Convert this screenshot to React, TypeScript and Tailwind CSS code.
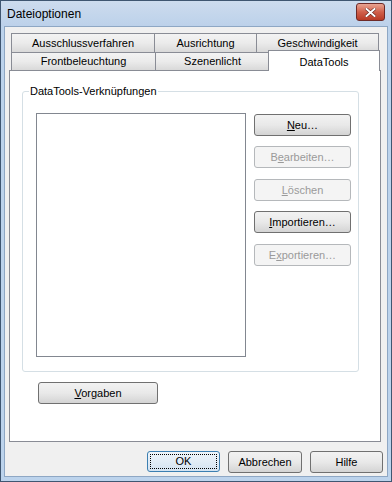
import React from 'react'

const FONT = { fontFamily: '"Liberation Sans", Arial, sans-serif' }

function Tab({ label, w }: { label: string; w: string }) {
  return (
    <div
      className={`${w} h-full -ml-px first:ml-0 flex items-center justify-center border border-b-0 border-[#898c95] bg-gradient-to-b from-[#f3f3f3] via-[#ebebeb] to-[#d9d9d9] text-[11px] text-black`}
    >
      {label}
    </div>
  )
}

function Btn({
  children,
  w = 'w-[97px]',
  disabled = false,
  className = '',
}: {
  children: React.ReactNode
  w?: string
  disabled?: boolean
  className?: string
}) {
  return (
    <div
      className={`${w} h-[22px] flex items-center justify-center rounded-[3px] border text-[11px] ${
        disabled
          ? 'border-[#b5b8bb] bg-[#f4f4f4] text-[#9a9a9a]'
          : 'border-[#707070] bg-gradient-to-b from-[#f2f2f2] via-[#e9e9e9] to-[#d4d4d4] text-black'
      } ${className}`}
    >
      {children}
    </div>
  )
}

export default function App() {
  return (
    <div className="w-[392px] h-[482px] flex flex-col border border-[#3f5671] bg-[#bcd3ec]" style={FONT}>
      {/* Title bar */}
      <div className="h-[25px] flex items-center justify-between pl-[6px] pr-[6px] bg-gradient-to-b from-[#cddcee] to-[#bcd1ea]">
        <span className="text-[12px] text-black">Dateioptionen</span>
        <div className="w-[29px] h-[18px] mt-[-3px] rounded-[3px] border border-[#6e2a27] bg-gradient-to-b from-[#e8a493] via-[#d0604b] to-[#b83a25] flex items-center justify-center">
          <svg width="11" height="9" viewBox="0 0 11 9">
            <path d="M1.5 1 L9.5 8 M9.5 1 L1.5 8" stroke="#5a1e16" strokeWidth="3" strokeLinecap="square" />
            <path d="M1.5 1 L9.5 8 M9.5 1 L1.5 8" stroke="#ffffff" strokeWidth="2" strokeLinecap="square" />
          </svg>
        </div>
      </div>

      {/* Client area */}
      <div className="flex-1 mx-[3px] mb-[4px] bg-[#f0f0f0] border border-[#8ea7c4] flex flex-col pt-[6px]">
        {/* Tabs row 1 */}
        <div className="ml-[6px] flex h-[19px]">
          <Tab label="Ausschlussverfahren" w="w-[144px]" />
          <Tab label="Ausrichtung" w="w-[103px]" />
          <Tab label="Geschwindigkeit" w="w-[123px]" />
        </div>
        {/* Tabs row 2 */}
        <div className="ml-[6px] flex items-end h-[18px]">
          <Tab label="Frontbeleuchtung" w="w-[145px]" />
          <Tab label="Szenenlicht" w="w-[115px]" />
          <div className="relative z-10 w-[112px] h-[21px] -ml-[2px] mb-[-1px] flex items-start justify-center pt-[3px] border border-b-0 border-[#898c95] bg-white text-[11px] text-black">
            DataTools
          </div>
        </div>

        {/* Tab page */}
        <div className="ml-[4px] w-[372px] h-[372px] border border-[#898c95] bg-white flex flex-col px-[12px] pt-[20px]">
          {/* Group box */}
          <div className="relative w-[337px] h-[281px] rounded-[3px] border border-[#d5dfe5] flex pl-[13px] pt-[21px]">
            <span className="absolute left-[6px] -top-[8px] px-[1px] bg-white text-[11px] text-black leading-[14px]">
              DataTools-Verknüpfungen
            </span>
            <div className="w-[210px] h-[244px] border border-[#828790] bg-white" />
            <div className="ml-[8px] flex flex-col pt-[1px]">
              <Btn><span><u>N</u>eu…</span></Btn>
              <Btn disabled className="mt-[10px]"><span>B<u>e</u>arbeiten…</span></Btn>
              <Btn disabled className="mt-[11px]"><span><u>L</u>öschen</span></Btn>
              <Btn className="mt-[10px]"><span><u>I</u>mportieren…</span></Btn>
              <Btn disabled className="mt-[11px]"><span>E<u>x</u>portieren…</span></Btn>
            </div>
          </div>
          <Btn w="w-[120px]" className="mt-[10px] ml-[16px]"><span><u>V</u>orgaben</span></Btn>
        </div>

        {/* Dialog buttons */}
        <div className="flex justify-end gap-[8px] mt-[9px] pr-[4px]">
          <div className="w-[73px] h-[21px] rounded-[3px] border border-[#3c7fb1] bg-gradient-to-b from-[#eef5fb] to-[#d4e3f1] p-[2px]">
            <div className="w-full h-full border border-dotted border-black flex items-center justify-center text-[11px] text-black">
              OK
            </div>
          </div>
          <Btn w="w-[74px]" className="h-[21px]">Abbrechen</Btn>
          <Btn w="w-[73px]" className="h-[21px]">Hilfe</Btn>
        </div>
      </div>
    </div>
  )
}
